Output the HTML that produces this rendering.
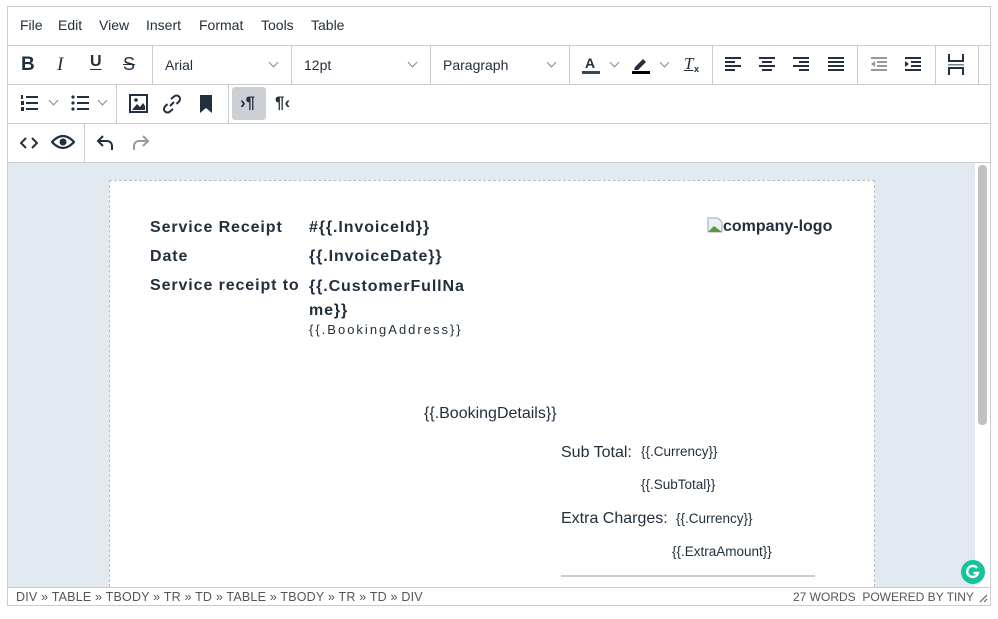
<!DOCTYPE html>
<html><head><meta charset="utf-8"><style>
*{box-sizing:border-box;margin:0;padding:0}
body{width:998px;height:619px;background:#fff;font-family:"Liberation Sans",Arial,sans-serif;color:#222f3e;position:relative;overflow:hidden}
.a{position:absolute}
.frame{left:7px;top:6px;width:984px;height:600px;border:1px solid #ccc}
.hl{position:absolute;left:8px;width:982px;height:1px;background:#ccc}
.vl{position:absolute;width:1px;height:39px;background:#ccc}
.menu{top:17px;font-size:14px}
.sel{font-size:14px;top:57px}
.chev{position:absolute;width:7px;height:7px;border-right:1.3px solid #888;border-bottom:1.3px solid #888;transform:rotate(45deg)}
svg{position:absolute}
.ct{font-family:"Liberation Sans",Arial,sans-serif;color:#222f3e}
.b{font-weight:bold;font-size:16px;letter-spacing:0.9px}
.s{font-size:13.5px}
</style></head><body>
<div class="a frame"></div>
<div class="a menu" style="left:20px">File</div>
<div class="a menu" style="left:58px">Edit</div>
<div class="a menu" style="left:99px">View</div>
<div class="a menu" style="left:146px">Insert</div>
<div class="a menu" style="left:199px">Format</div>
<div class="a menu" style="left:261px">Tools</div>
<div class="a menu" style="left:311px">Table</div>
<div class="hl" style="top:45px"></div>
<div class="hl" style="top:84px"></div>
<div class="hl" style="top:123px"></div>
<div class="hl" style="top:162px"></div>
<div class="vl" style="left:152px;top:45px"></div>
<div class="vl" style="left:291px;top:45px"></div>
<div class="vl" style="left:430px;top:45px"></div>
<div class="vl" style="left:569px;top:45px"></div>
<div class="vl" style="left:712px;top:45px"></div>
<div class="vl" style="left:857px;top:45px"></div>
<div class="vl" style="left:935px;top:45px"></div>
<div class="vl" style="left:978px;top:45px"></div>
<div class="vl" style="left:116px;top:84px"></div>
<div class="vl" style="left:228px;top:84px"></div>
<div class="vl" style="left:84px;top:123px"></div>
<div class="a" style="left:21px;top:54px;font-size:19px;font-weight:bold">B</div>
<div class="a" style="left:57px;top:54px;font-size:19px;font-style:italic;font-family:'Liberation Serif',serif">I</div>
<div class="a" style="left:90px;top:53px;font-size:16px;text-decoration:underline;text-underline-offset:3px;font-weight:600">U</div>
<div class="a" style="left:123px;top:54px;font-size:18px;text-decoration:line-through">S</div>
<div class="a sel" style="left:165px">Arial</div><div class="chev" style="left:270px;top:59px"></div>
<div class="a sel" style="left:304px">12pt</div><div class="chev" style="left:409px;top:59px"></div>
<div class="a sel" style="left:443px">Paragraph</div><div class="chev" style="left:548px;top:59px"></div>
<div class="a" style="left:585px;top:55px;font-size:14px;font-weight:bold">A</div>
<div class="a" style="left:582px;top:71px;width:18px;height:3px;background:#34495e"></div>
<div class="chev" style="left:611px;top:59px"></div>
<svg style="left:631px;top:55px" width="20" height="20" viewBox="0 0 20 20"><path d="M4 12 L12 4 L15 7 L7 15 L3 15Z" fill="#222f3e"/><rect x="1" y="16" width="18" height="3" fill="#000"/></svg>
<div class="chev" style="left:661px;top:59px"></div>
<div class="a" style="left:684px;top:54px;font-size:17px;font-style:italic;text-decoration:underline;font-family:'Liberation Serif',serif">T</div><div class="a" style="left:694px;top:64px;font-size:9px;font-weight:bold">x</div>
<svg style="left:725px;top:57px" width="18" height="16"><g fill="#222f3e"><rect y="0" width="16" height="2"/><rect y="4" width="10" height="2"/><rect y="8" width="16" height="2"/><rect y="12" width="10" height="2"/></g></svg>
<svg style="left:759px;top:57px" width="18" height="16"><g fill="#222f3e"><rect y="0" width="16" height="2"/><rect x="3" y="4" width="10" height="2"/><rect y="8" width="16" height="2"/><rect x="3" y="12" width="10" height="2"/></g></svg>
<svg style="left:793px;top:57px" width="18" height="16"><g fill="#222f3e"><rect y="0" width="16" height="2"/><rect x="6" y="4" width="10" height="2"/><rect y="8" width="16" height="2"/><rect x="6" y="12" width="10" height="2"/></g></svg>
<svg style="left:828px;top:57px" width="18" height="16"><g fill="#222f3e"><rect y="0" width="16" height="2"/><rect y="4" width="16" height="2"/><rect y="8" width="16" height="2"/><rect y="12" width="16" height="2"/></g></svg>
<svg style="left:871px;top:57px" width="18" height="16"><g fill="#999"><rect y="0" width="16" height="2"/><rect x="6" y="4" width="10" height="2"/><rect x="6" y="8" width="10" height="2"/><rect y="12" width="16" height="2"/><path d="M0 7 L4 4 L4 10Z"/></g></svg>
<svg style="left:905px;top:57px" width="18" height="16"><g fill="#222f3e"><rect y="0" width="16" height="2"/><rect x="6" y="4" width="10" height="2"/><rect x="6" y="8" width="10" height="2"/><rect y="12" width="16" height="2"/><path d="M4 7 L0 4 L0 10Z"/></g></svg>
<svg style="left:947px;top:54px" width="18" height="22"><g fill="#222f3e"><rect x="1" y="0" width="2" height="7"/><rect x="15" y="0" width="2" height="7"/><rect x="1" y="6" width="16" height="2"/><rect x="1" y="10" width="16" height="1.5" opacity=".6"/><rect x="1" y="13" width="16" height="2"/><rect x="1" y="13" width="2" height="8"/><rect x="15" y="13" width="2" height="8"/></g></svg>
<svg style="left:20px;top:95px" width="20" height="18"><g fill="#222f3e"><rect x="6" y="1" width="12" height="2"/><rect x="6" y="7" width="12" height="2"/><rect x="6" y="13" width="12" height="2"/><rect x="1" y="0" width="2" height="4"/><rect x="1" y="6" width="3" height="4"/><rect x="1" y="12" width="3" height="4"/></g></svg>
<div class="chev" style="left:50px;top:97px"></div>
<svg style="left:71px;top:95px" width="20" height="18"><g fill="#222f3e"><rect x="6" y="1" width="12" height="2"/><rect x="6" y="7" width="12" height="2"/><rect x="6" y="13" width="12" height="2"/><circle cx="2" cy="2" r="1.6"/><circle cx="2" cy="8" r="1.6"/><circle cx="2" cy="14" r="1.6"/></g></svg>
<div class="chev" style="left:99px;top:97px"></div>
<svg style="left:129px;top:94px" width="19" height="19"><rect x="1" y="1" width="17" height="17" fill="none" stroke="#222f3e" stroke-width="2"/><path d="M3 16 L8 10 L11 13 L14 9 L16 12 L16 16Z" fill="#222f3e"/><circle cx="7" cy="6" r="1.8" fill="#222f3e"/></svg>
<svg style="left:162px;top:94px" width="20" height="20"><g fill="none" stroke="#222f3e" stroke-width="2"><path d="M8 12 L12 8"/><path d="M9 5 L12 2.5 a3 3 0 0 1 5 5 L14.5 10"/><path d="M11 15 L8 17.5 a3 3 0 0 1 -5 -5 L5.5 10"/></g></svg>
<svg style="left:199px;top:94px" width="14" height="20"><path d="M1 1 H13 V19 L7 14 L1 19Z" fill="#222f3e"/></svg>
<div class="a" style="left:232px;top:87px;width:34px;height:33px;background:#ccd0d5;border-radius:3px"></div>
<div class="a" style="left:240px;top:93px;font-size:17px;font-weight:bold">›¶</div>
<div class="a" style="left:275px;top:93px;font-size:17px;font-weight:bold">¶‹</div>
<svg style="left:20px;top:136px" width="18" height="14"><path d="M6 2 L1 7 L6 12 M12 2 L17 7 L12 12" fill="none" stroke="#222f3e" stroke-width="2"/></svg>
<svg style="left:51px;top:133px" width="24" height="18"><path d="M1 9 Q12 -3 23 9 Q12 21 1 9Z" fill="none" stroke="#222f3e" stroke-width="2.3"/><circle cx="12" cy="9" r="3.5" fill="#222f3e"/></svg>
<svg style="left:96px;top:134px" width="20" height="18"><path d="M7 2 L2 7 L7 12 M2 7 H11 a5 5 0 0 1 5 5 V16" fill="none" stroke="#222f3e" stroke-width="2"/></svg>
<svg style="left:131px;top:134px" width="20" height="18"><path d="M12 2 L17 7 L12 12 M17 7 H8 a5 5 0 0 0 -5 5 V16" fill="none" stroke="#999" stroke-width="2"/></svg>
<div class="a" style="left:8px;top:163px;width:967px;height:424px;background:#e3e9f0"></div>
<div class="a" style="left:976px;top:163px;width:13px;height:424px;background:#fff"></div>
<div class="a" style="left:978px;top:165px;width:9px;height:260px;background:#c1c1c1;border-radius:4px"></div>
<div class="a" style="left:109px;top:180px;width:766px;height:407px;background:#fff;border:1px dashed #bbb;border-bottom:none"></div>
<div class="a ct b" style="left:150px;top:219px">Service Receipt</div>
<div class="a ct b" style="left:309px;top:219px">#{{.InvoiceId}}</div>
<div class="a ct b" style="left:150px;top:248px">Date</div>
<div class="a ct b" style="left:309px;top:248px">{{.InvoiceDate}}</div>
<div class="a ct b" style="left:150px;top:277px">Service receipt to</div>
<div class="a ct b" style="left:309px;top:275px;line-height:24px;width:170px">{{.CustomerFullNa<br>me}}</div>
<div class="a ct" style="left:309px;top:322px;font-size:13px;letter-spacing:2px">{{.BookingAddress}}</div>
<svg style="left:707px;top:217px" width="16" height="16"><path d="M1 1 H11 L15 5 V15 H1Z" fill="#e8f0f8" stroke="#aaa"/><path d="M1 15 L7 9 L15 15Z" fill="#5a9a3a"/></svg>
<div class="a ct" style="left:723px;top:218px;font-size:16px;font-weight:bold">company-logo</div>
<div class="a ct" style="left:424px;top:405px;font-size:16px">{{.BookingDetails}}</div>
<div class="a ct" style="left:561px;top:444px;font-size:16px">Sub Total:</div>
<div class="a ct s" style="left:641px;top:444px">{{.Currency}}</div>
<div class="a ct s" style="left:641px;top:477px">{{.SubTotal}}</div>
<div class="a ct" style="left:561px;top:510px;font-size:16px">Extra Charges:</div>
<div class="a ct s" style="left:676px;top:511px">{{.Currency}}</div>
<div class="a ct s" style="left:672px;top:544px">{{.ExtraAmount}}</div>
<div class="a" style="left:561px;top:575px;width:254px;height:2px;background:#ccc"></div>
<div class="a" style="left:961px;top:560px;width:24px;height:24px;border-radius:50%;background:#15c39a"></div>
<svg style="left:964px;top:563px" width="18" height="18"><path d="M13 5 A5.5 5.5 0 1 0 14 10 H9.5" fill="none" stroke="#fff" stroke-width="2.4"/></svg>
<div class="hl" style="top:587px"></div>
<div class="a" style="left:16px;top:590px;font-size:12.5px;color:#555;letter-spacing:0.2px">DIV » TABLE » TBODY » TR » TD » TABLE » TBODY » TR » TD » DIV</div>
<div class="a" style="left:793px;top:590px;font-size:12px;color:#555">27 WORDS&nbsp; POWERED BY TINY</div>
<svg style="left:978px;top:593px" width="10" height="10"><path d="M9 2 L2 9 M9 6 L6 9" stroke="#555" stroke-width="1"/></svg>
</body></html>
